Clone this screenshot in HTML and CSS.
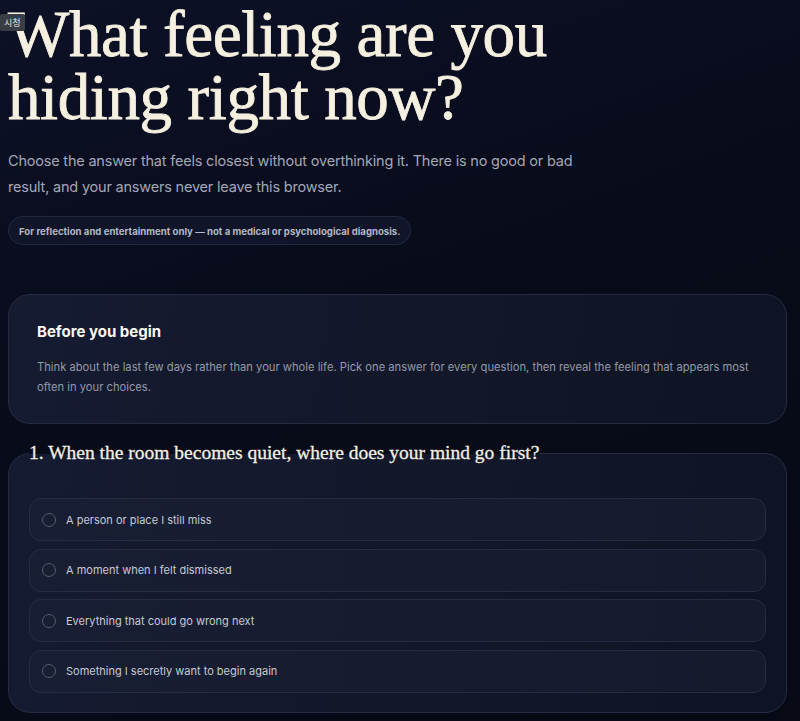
FILE: index.html
```html
<!DOCTYPE html>
<html lang="en">
<head>
    <meta charset="UTF-8">
    <meta name="viewport" content="width=device-width, initial-scale=1.0">
    <title>Hidden feeling quiz</title>
    <link rel="stylesheet" href="styles.css">
</head>
<body>
    <span class="tag">시청</span>
    <main class="page">
        <header class="intro">
            <h1 class="title">What feeling are you hiding right now?</h1>
            <p class="lead">Choose the answer that feels closest without overthinking it. There is no good or bad result, and your answers never leave this browser.</p>
            <span class="note">For reflection and entertainment only — not a medical or psychological diagnosis.</span>
        </header>

        <section class="card info">
            <h2>Before you begin</h2>
            <p>Think about the last few days rather than your whole life. Pick one answer for every question, then reveal the feeling that appears most often in your choices.</p>
        </section>

        <form class="quiz">
            <fieldset class="card question">
                <legend>1. When the room becomes quiet, where does your mind go first?</legend>
                <label class="option"><input type="radio" name="q1" value="sad"><span>A person or place I still miss</span></label>
                <label class="option"><input type="radio" name="q1" value="anger"><span>A moment when I felt dismissed</span></label>
                <label class="option"><input type="radio" name="q1" value="fear"><span>Everything that could go wrong next</span></label>
                <label class="option"><input type="radio" name="q1" value="hope"><span>Something I secretly want to begin again</span></label>
            </fieldset>
        </form>
    </main>
</body>
</html>
```

FILE: styles.css
```css
*{
    margin: 0;
    padding: 0;
    box-sizing: border-box;
}
html, body{
    height: 100%;
}
body{
    background: linear-gradient(160deg, #0d1127 0%, #080b19 45%, #070915 100%);
    color: #e8e6df;
    font-family: Inter, "Noto Sans", sans-serif;
    overflow: hidden;
}
.tag{
    position: absolute;
    top: 14px;
    left: 0;
    padding: 1px 4px;
    background: #3b3d44;
    color: #e6e6e6;
    font-size: 9px;
    line-height: 15px;
    border-radius: 2px;
    font-family: "Noto Sans CJK KR", sans-serif;
    z-index: 2;
}
.page{
    width: 779px;
    margin-left: 8px;
    padding-top: 3px;
}
.title{
    font-family: "Liberation Serif", serif;
    font-weight: 400;
    font-size: 65px;
    line-height: 63px;
    letter-spacing: -0.4px;
    color: #f6f0e0;
    -webkit-text-stroke: 0.8px #f6f0e0;
    width: 580px;
}
.lead{
    margin-top: 19px;
    width: 580px;
    font-size: 14.5px;
    letter-spacing: -0.2px;
    line-height: 26px;
    color: #a3a7b6;
}
.note{
    display: inline-block;
    margin-top: 16px;
    padding: 0 10px;
    height: 29px;
    line-height: 29px;
    font-size: 9.6px;
    font-weight: 700;
    color: #b4b8c4;
    background: #101529;
    border: 1px solid #232a40;
    border-radius: 15px;
}
.card{
    border: 1px solid #252c42;
    border-radius: 22px;
    background: linear-gradient(100deg, #151b31 0%, #121729 60%, #0f1424 100%);
}
.info{
    margin-top: 49px;
    height: 130px;
    padding: 27px 28px;
}
.info h2{
    font-size: 15px;
    line-height: 20px;
    font-weight: 700;
    color: #fbf8f0;
}
.info p{
    margin-top: 15px;
    font-size: 11.2px;
    line-height: 20px;
    color: #9599a8;
}
.quiz{
    margin-top: 17px;
}
.question{
    padding: 33px 20px 19px;
    display: flex;
    flex-direction: column;
    gap: 7.5px;
}
.question legend{
    padding: 0;
    font-family: "Liberation Serif", serif;
    font-size: 19.5px;
    line-height: 24px;
    color: #f2eee2;
    -webkit-text-stroke: 0.3px #f2eee2;
}
.option{
    display: flex;
    align-items: center;
    gap: 10px;
    height: 43px;
    padding-left: 12px;
    border: 1px solid #262d43;
    border-radius: 12px;
    background: linear-gradient(100deg, #181e33 0%, #151a2d 100%);
    font-size: 11px;
    color: #c6c9d3;
    cursor: pointer;
}
.option input{
    appearance: none;
    width: 14px;
    height: 14px;
    border: 1.5px solid #565c6e;
    border-radius: 50%;
    flex: none;
}
.option input:checked{
    border: 4px solid #e9d9b0;
}
```
